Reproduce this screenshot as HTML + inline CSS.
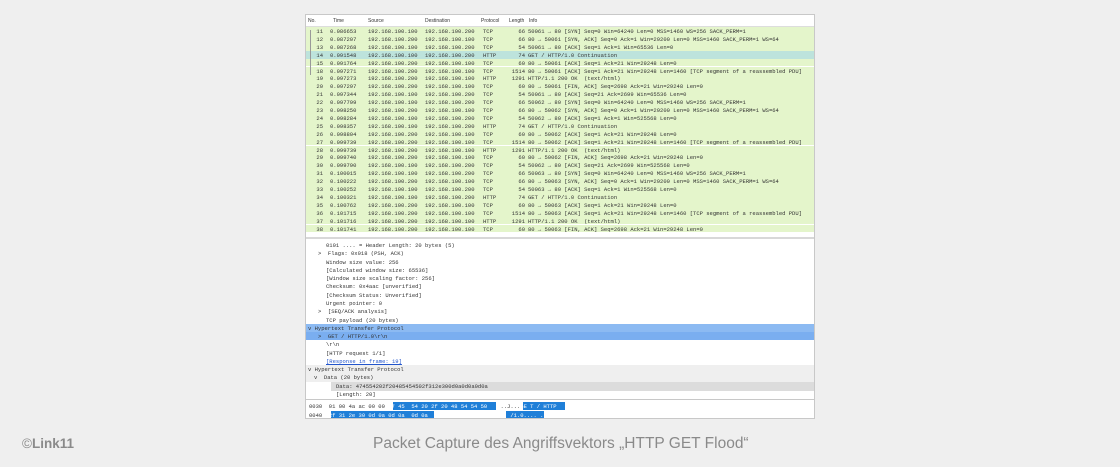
<!DOCTYPE html>
<html><head><meta charset="utf-8"><style>
body{margin:0;width:1120px;height:467px;background:#efefef;position:relative;overflow:hidden;font-family:"Liberation Sans",sans-serif}
#ws{position:absolute;left:305px;top:14px;width:510px;height:405px;background:#fff;border:1px solid #c8c8c8;box-sizing:border-box;overflow:hidden}
.m{font-family:"Liberation Mono",monospace;font-size:5.5px;color:#333;white-space:pre;position:absolute}
.r{position:absolute;left:0;width:510px;height:7.9px;background:#e4f5cb}
.hd{position:absolute;left:0;top:0;width:510px;height:11px;background:#fff;border-bottom:1px solid #ddd;font-size:5px;color:#444}
</style></head><body>
<div id="ws">
<div class="hd"><span class="m" style="left:2px;top:3px;font-family:'Liberation Sans';font-size:5px">No.</span><span class="m" style="left:27px;top:3px;font-family:'Liberation Sans';font-size:5px">Time</span><span class="m" style="left:62px;top:3px;font-family:'Liberation Sans';font-size:5px">Source</span><span class="m" style="left:119px;top:3px;font-family:'Liberation Sans';font-size:5px">Destination</span><span class="m" style="left:175px;top:3px;font-family:'Liberation Sans';font-size:5px">Protocol</span><span class="m" style="left:203px;top:3px;font-family:'Liberation Sans';font-size:5px">Length</span><span class="m" style="left:223px;top:3px;font-family:'Liberation Sans';font-size:5px">Info</span></div>
<div id="rows" style="position:absolute;left:0;top:12px;width:510px;height:210px;overflow:hidden"></div>
<div style="position:absolute;left:0;top:222px;width:510px;height:2px;background:#d8d8d8"></div>
<div style="position:absolute;left:0;top:309px;width:510px;height:8.3px;background:#8cbaf2"></div>
<div style="position:absolute;left:0;top:317px;width:510px;height:8.3px;background:#7aaef0"></div>
<div style="position:absolute;left:0;top:350px;width:510px;height:17px;background:#efefef"></div>
<div style="position:absolute;left:25px;top:367px;width:485px;height:9px;background:#dcdcdc"></div>
<div id="det"></div>
<div style="position:absolute;left:0;top:384px;width:510px;height:1px;background:#c8c8c8"></div>
<div style="position:absolute;left:87px;top:387px;width:103px;height:8px;background:#1f7fd8"></div>
<div style="position:absolute;left:25px;top:395.5px;width:103px;height:8px;background:#1f7fd8"></div>
<div style="position:absolute;left:217px;top:387px;width:42px;height:8px;background:#1f7fd8"></div>
<div style="position:absolute;left:200px;top:395.5px;width:38px;height:8px;background:#1f7fd8"></div>
<span class="m" style="left:3px;top:388px">0030  01 00 4a ac 00 00 <span style="color:#fff">47 45  54 20 2f 20 48 54 54 50</span>    ..J...<span style="color:#fff">GE T / HTTP</span></span>
<span class="m" style="left:3px;top:396.5px">0040  <span style="color:#fff">2f 31 2e 30 0d 0a 0d 0a  0d 0a</span>                         <span style="color:#fff">/1.0.... ..</span></span>
</div>
<div style="position:absolute;left:22px;top:436px;font-size:13.5px;color:#8a8a8a">©<b style="font-weight:600">Link11</b></div>
<div style="position:absolute;left:373px;top:435px;font-size:15.5px;color:#8a8a8a">Packet Capture des Angriffsvektors „HTTP GET Flood“</div>
<script>
var d=[
["11","0.086653","192.168.100.100","192.168.100.200","TCP","66","50061 → 80 [SYN] Seq=0 Win=64240 Len=0 MSS=1460 WS=256 SACK_PERM=1"],
["12","0.087207","192.168.100.200","192.168.100.100","TCP","66","80 → 50061 [SYN, ACK] Seq=0 Ack=1 Win=29200 Len=0 MSS=1460 SACK_PERM=1 WS=64"],
["13","0.087268","192.168.100.100","192.168.100.200","TCP","54","50061 → 80 [ACK] Seq=1 Ack=1 Win=65536 Len=0"],
["14","0.091548","192.168.100.100","192.168.100.200","HTTP","74","GET / HTTP/1.0 Continuation"],
["15","0.091764","192.168.100.200","192.168.100.100","TCP","60","80 → 50061 [ACK] Seq=1 Ack=21 Win=29248 Len=0"],
["18","0.097271","192.168.100.200","192.168.100.100","TCP","1514","80 → 50061 [ACK] Seq=1 Ack=21 Win=29248 Len=1460 [TCP segment of a reassembled PDU]"],
["19","0.097273","192.168.100.200","192.168.100.100","HTTP","1291","HTTP/1.1 200 OK  (text/html)"],
["20","0.097297","192.168.100.200","192.168.100.100","TCP","60","80 → 50061 [FIN, ACK] Seq=2698 Ack=21 Win=29248 Len=0"],
["21","0.097344","192.168.100.100","192.168.100.200","TCP","54","50061 → 80 [ACK] Seq=21 Ack=2699 Win=65536 Len=0"],
["22","0.097799","192.168.100.100","192.168.100.200","TCP","66","50062 → 80 [SYN] Seq=0 Win=64240 Len=0 MSS=1460 WS=256 SACK_PERM=1"],
["23","0.098250","192.168.100.200","192.168.100.100","TCP","66","80 → 50062 [SYN, ACK] Seq=0 Ack=1 Win=29200 Len=0 MSS=1460 SACK_PERM=1 WS=64"],
["24","0.098284","192.168.100.100","192.168.100.200","TCP","54","50062 → 80 [ACK] Seq=1 Ack=1 Win=525568 Len=0"],
["25","0.098357","192.168.100.100","192.168.100.200","HTTP","74","GET / HTTP/1.0 Continuation"],
["26","0.098804","192.168.100.200","192.168.100.100","TCP","60","80 → 50062 [ACK] Seq=1 Ack=21 Win=29248 Len=0"],
["27","0.099739","192.168.100.200","192.168.100.100","TCP","1514","80 → 50062 [ACK] Seq=1 Ack=21 Win=29248 Len=1460 [TCP segment of a reassembled PDU]"],
["28","0.099739","192.168.100.200","192.168.100.100","HTTP","1291","HTTP/1.1 200 OK  (text/html)"],
["29","0.099740","192.168.100.200","192.168.100.100","TCP","60","80 → 50062 [FIN, ACK] Seq=2698 Ack=21 Win=29248 Len=0"],
["30","0.099790","192.168.100.100","192.168.100.200","TCP","54","50062 → 80 [ACK] Seq=21 Ack=2699 Win=525568 Len=0"],
["31","0.100015","192.168.100.100","192.168.100.200","TCP","66","50063 → 80 [SYN] Seq=0 Win=64240 Len=0 MSS=1460 WS=256 SACK_PERM=1"],
["32","0.100222","192.168.100.200","192.168.100.100","TCP","66","80 → 50063 [SYN, ACK] Seq=0 Ack=1 Win=29200 Len=0 MSS=1460 SACK_PERM=1 WS=64"],
["33","0.100252","192.168.100.100","192.168.100.200","TCP","54","50063 → 80 [ACK] Seq=1 Ack=1 Win=525568 Len=0"],
["34","0.100321","192.168.100.100","192.168.100.200","HTTP","74","GET / HTTP/1.0 Continuation"],
["35","0.100762","192.168.100.200","192.168.100.100","TCP","60","80 → 50063 [ACK] Seq=1 Ack=21 Win=29248 Len=0"],
["36","0.101715","192.168.100.200","192.168.100.100","TCP","1514","80 → 50063 [ACK] Seq=1 Ack=21 Win=29248 Len=1460 [TCP segment of a reassembled PDU]"],
["37","0.101716","192.168.100.200","192.168.100.100","HTTP","1291","HTTP/1.1 200 OK  (text/html)"],
["38","0.101741","192.168.100.200","192.168.100.100","TCP","60","80 → 50063 [FIN, ACK] Seq=2698 Ack=21 Win=29248 Len=0"]];
var h="";
d.forEach(function(r,i){var t=i*7.9;var bg=r[0]=="14"?"#bde3dc":"#e4f5cb";
h+='<div class="r" style="top:'+t+'px;background:'+bg+'"></div>';
h+='<span class="m" style="top:'+(t+1)+'px;left:6px;width:11px;text-align:right">'+r[0]+'</span>';
h+='<span class="m" style="top:'+(t+1)+'px;left:24px">'+r[1]+'</span>';
h+='<span class="m" style="top:'+(t+1)+'px;left:62px">'+r[2]+'</span>';
h+='<span class="m" style="top:'+(t+1)+'px;left:119px">'+r[3]+'</span>';
h+='<span class="m" style="top:'+(t+1)+'px;left:177px">'+r[4]+'</span>';
h+='<span class="m" style="top:'+(t+1)+'px;left:200px;width:19px;text-align:right">'+r[5]+'</span>';
h+='<span class="m" style="top:'+(t+1)+'px;left:222px">'+r[6]+'</span>';});
h+='<div style="position:absolute;left:4px;top:3px;width:1px;height:45px;background:#999"></div>';
document.getElementById("rows").innerHTML=h;
var L=[[20,"0101 .... = Header Length: 20 bytes (5)"],[12,">  Flags: 0x018 (PSH, ACK)"],[20,"Window size value: 256"],[20,"[Calculated window size: 65536]"],[20,"[Window size scaling factor: 256]"],[20,"Checksum: 0x4aac [unverified]"],[20,"[Checksum Status: Unverified]"],[20,"Urgent pointer: 0"],[12,">  [SEQ/ACK analysis]"],[20,"TCP payload (20 bytes)"],[2,"v Hypertext Transfer Protocol"],[12,">  GET / HTTP/1.0\\r\\n"],[20,"\\r\\n"],[20,"[HTTP request 1/1]"],[20,"<u style='color:#2255cc'>[Response in frame: 19]</u>"],[2,"v Hypertext Transfer Protocol"],[8,"v  Data (20 bytes)"],[30,"Data: 474554202f20485454502f312e300d0a0d0a0d0a"],[30,"[Length: 20]"]];
var g="";L.forEach(function(l,i){g+='<span class="m" style="left:'+l[0]+'px;top:'+(227+i*8.28)+'px">'+l[1]+'</span>';});
document.getElementById("det").innerHTML=g;
</script>
</body></html>
